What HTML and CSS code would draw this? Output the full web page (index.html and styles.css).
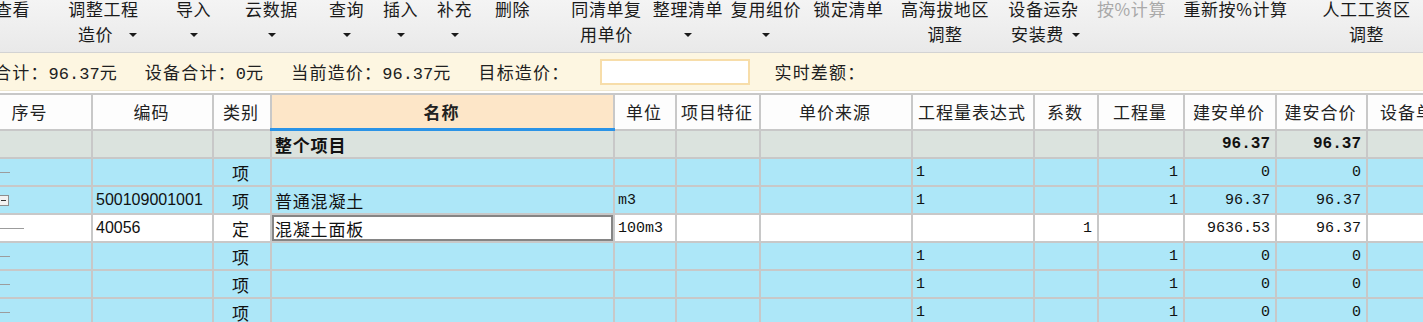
FILE: index.html
```html
<!DOCTYPE html>
<html lang="zh-CN">
<head>
  <meta charset="UTF-8" />
  <title>分部分项</title>
  <link rel="stylesheet" href="styles.css">
</head>
<body>

  <div class="toolbar">
    <div class="tb-btn"><span>查看</span></div>
    <div class="tb-btn"><span>调整工程</span><span class="tb-sub drop"><span>造价</span><i class="caret"></i></span></div>
    <div class="tb-btn"><span>导入</span><span class="tb-sub"><i class="caret"></i></span></div>
    <div class="tb-btn"><span>云数据</span><span class="tb-sub"><i class="caret"></i></span></div>
    <div class="tb-btn"><span>查询</span><span class="tb-sub"><i class="caret"></i></span></div>
    <div class="tb-btn"><span>插入</span><span class="tb-sub"><i class="caret"></i></span></div>
    <div class="tb-btn"><span>补充</span><span class="tb-sub"><i class="caret"></i></span></div>
    <div class="tb-btn"><span>删除</span></div>
    <div class="tb-btn"><span>同清单复</span><span class="tb-sub">用单价</span></div>
    <div class="tb-btn"><span>整理清单</span><span class="tb-sub"><i class="caret"></i></span></div>
    <div class="tb-btn"><span>复用组价</span><span class="tb-sub"><i class="caret"></i></span></div>
    <div class="tb-btn"><span>锁定清单</span></div>
    <div class="tb-btn"><span>高海拔地区</span><span class="tb-sub">调整</span></div>
    <div class="tb-btn"><span>设备运杂</span><span class="tb-sub drop short"><span>安装费</span><i class="caret"></i></span></div>
    <div class="tb-btn disabled"><span>按%计算</span></div>
    <div class="tb-btn"><span>重新按%计算</span></div>
    <div class="tb-btn"><span>人工工资区</span><span class="tb-sub">调整</span></div>
  </div>

  <div class="summary">
    <span>合计：<span class="num">96.37</span>元</span>
    <span>设备合计：<span class="num">0</span>元</span>
    <span>当前造价：<span class="num">96.37</span>元</span>
    <span>目标造价：</span>
    <input class="target-input" type="text" />
    <span>实时差额：</span>
  </div>

  <table class="grid">
    <colgroup>
      <col class="c-seq"><col class="c-code"><col class="c-type"><col class="c-name">
      <col class="c-unit"><col class="c-feat"><col class="c-src"><col class="c-expr">
      <col class="c-coef"><col class="c-qty"><col class="c-price"><col class="c-total">
      <col class="c-equip">
    </colgroup>
    <thead>
      <tr>
        <th>序号</th><th>编码</th><th>类别</th><th class="active">名称</th>
        <th>单位</th><th>项目特征</th><th>单价来源</th><th>工程量表达式</th>
        <th>系数</th><th>工程量</th><th>建安单价</th><th>建安合价</th><th>设备单价</th>
      </tr>
    </thead>
    <tbody>
      <tr class="total">
        <td></td><td></td><td></td><td class="name">整个项目</td>
        <td></td><td></td><td></td><td></td><td></td><td></td>
        <td class="num">96.37</td><td class="num">96.37</td><td></td>
      </tr>
      <tr class="item">
        <td><i class="tree-dash"></i></td><td></td><td class="type">项</td><td></td>
        <td></td><td></td><td></td><td class="mono">1</td><td></td>
        <td class="num">1</td><td class="num">0</td><td class="num">0</td><td></td>
      </tr>
      <tr class="item">
        <td><div class="tree"><i class="tree-line"></i><i class="tree-box"></i></div></td>
        <td class="code">500109001001</td><td class="type">项</td><td class="name">普通混凝土</td>
        <td class="mono">m3</td><td></td><td></td><td class="mono">1</td><td></td>
        <td class="num">1</td><td class="num">96.37</td><td class="num">96.37</td><td></td>
      </tr>
      <tr class="quota">
        <td><i class="tree-dash long"></i></td>
        <td class="code">40056</td><td class="type">定</td><td class="name editing">混凝土面板</td>
        <td class="mono">100m3</td><td></td><td></td><td></td><td class="num">1</td>
        <td></td><td class="num">9636.53</td><td class="num">96.37</td><td></td>
      </tr>
      <tr class="item">
        <td><i class="tree-dash"></i></td><td></td><td class="type">项</td><td></td>
        <td></td><td></td><td></td><td class="mono">1</td><td></td>
        <td class="num">1</td><td class="num">0</td><td class="num">0</td><td></td>
      </tr>
      <tr class="item">
        <td><i class="tree-dash"></i></td><td></td><td class="type">项</td><td></td>
        <td></td><td></td><td></td><td class="mono">1</td><td></td>
        <td class="num">1</td><td class="num">0</td><td class="num">0</td><td></td>
      </tr>
      <tr class="item">
        <td><i class="tree-dash"></i></td><td></td><td class="type">项</td><td></td>
        <td></td><td></td><td></td><td class="mono">1</td><td></td>
        <td class="num">1</td><td class="num">0</td><td class="num">0</td><td></td>
      </tr>
    </tbody>
  </table>

</body>
</html>
```

FILE: styles.css
```css
html, body {
  margin: 0;
  overflow: hidden;
}
body {
  width: 1423px;
  height: 322px;
  font-family: "Noto Sans CJK SC", sans-serif;
  background: #fff;
  color: #1a1a1a;
}

/* toolbar */
.toolbar {
  display: grid;
  grid-template-columns: 51px 131px 49px 107px 43px 65px 43px 73px 115px 48px 108px 57px 136px 61px 115px 93px 169px;
  margin-left: -13px;
  height: 52px;
  background: linear-gradient(#f4f4f4, #e9e9e9);
  border-bottom: 1px solid #d3d3d3;
  font-size: 17px;
  letter-spacing: 0.6px;
}
.tb-btn {
  display: flex;
  flex-direction: column;
  align-items: center;
  gap: 8px;
  line-height: 17px;
  white-space: nowrap;
  cursor: default;
}
.tb-btn.disabled {
  color: #a9a9a9;
}
.tb-sub {
  display: flex;
  align-items: center;
  height: 17px;
}
.tb-sub.drop {
  padding-left: 8px;
}
.tb-sub.drop .caret {
  margin-left: 16px;
}
.tb-sub.drop.short {
  padding-left: 4px;
}
.tb-sub.drop.short .caret {
  margin-left: 8px;
}
.caret {
  display: inline-block;
  width: 0;
  height: 0;
  margin-top: 3px;
  border-left: 4px solid transparent;
  border-right: 4px solid transparent;
  border-top: 4px solid #1a1a1a;
}

/* summary bar */
.summary {
  display: flex;
  align-items: center;
  gap: 27px;
  height: 37px;
  margin-left: -6px;
  margin-bottom: 2px;
  background: #fdf6e1;
  border-bottom: 1px solid #efe7cf;
  font-size: 17px;
  letter-spacing: 1.2px;
  color: #202020;
  white-space: nowrap;
}
.summary .num {
  font-family: "Liberation Mono", monospace;
  font-size: 17px;
  letter-spacing: 0;
}
.target-input {
  box-sizing: border-box;
  width: 150px;
  height: 26px;
  margin: 0 -3px 0 4px;
  border: 2px solid #f7dda9;
  background: #fff;
}

/* data grid */
.grid {
  border-collapse: collapse;
  table-layout: fixed;
  width: 1498px;
  margin-left: -32px;
}
.c-seq { width: 123px; }
.c-code { width: 121px; }
.c-type { width: 58px; }
.c-name { width: 343px; }
.c-unit { width: 62px; }
.c-feat { width: 84px; }
.c-src { width: 152px; }
.c-expr { width: 122px; }
.c-coef { width: 64px; }
.c-qty { width: 86px; }
.c-price { width: 92px; }
.c-total { width: 91px; }
.c-equip { width: 100px; }

.grid th,
.grid td {
  border: 2px solid #c8c8c8;
  padding: 0 5px 0 3px;
  white-space: nowrap;
  overflow: hidden;
}
.grid th {
  height: 33px;
  font-weight: normal;
  font-size: 17px;
  letter-spacing: 1px;
  color: #222;
  background: #fdfdfd;
}
.grid th.active {
  background: #fde6c8;
  border-bottom: 3px solid #2b93e6;
  font-weight: bold;
}
.grid td {
  height: 26px;
  font-size: 17px;
  letter-spacing: 0.8px;
  color: #111;
}

.grid tr.total td { background: #dbe3de; }
.grid tr.item td { background: #ade7f8; }
.grid tr.quota td { background: #fff; }

.grid td.type { text-align: center; }
.grid td.code {
  font-family: "Liberation Sans", sans-serif;
  font-size: 16px;
  letter-spacing: 0;
}
.grid td.mono,
.grid td.num {
  font-family: "Liberation Mono", monospace;
  font-size: 15px;
  letter-spacing: 0;
}
.grid td.num { text-align: right; }
.grid tr.total td.name,
.grid tr.total td.num {
  font-weight: bold;
}
.grid tr.total td.num { font-size: 16px; }
.grid td.editing {
  box-shadow: inset 0 0 0 2px #858585;
}

/* tree markers in the first column */
.tree-dash {
  display: block;
  width: 40px;
  margin-left: -3px;
  border-top: 1px solid #9c9c9c;
}
.tree-dash.long { width: 54px; }
.tree {
  display: flex;
  align-items: center;
  margin-left: -3px;
}
.tree-line {
  width: 28px;
  border-top: 1px solid #9c9c9c;
}
.tree-box {
  position: relative;
  box-sizing: border-box;
  width: 11px;
  height: 11px;
  border: 1px solid #8e8e8e;
  background: #f2f2f2;
}
.tree-box::after {
  content: "";
  position: absolute;
  left: 2px;
  right: 2px;
  top: 4px;
  border-top: 1px solid #333;
}
```
